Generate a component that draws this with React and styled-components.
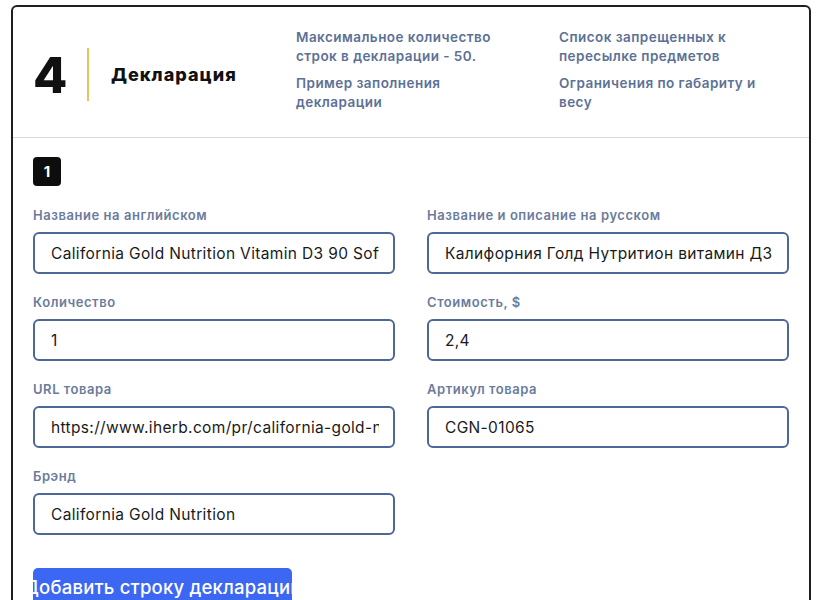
import React from "react";
import styled, { createGlobalStyle } from "styled-components";

const Global = createGlobalStyle`
  html, body { margin: 0; padding: 0; background: #fff; }
  body { font-family: Inter, "Noto Sans", sans-serif; color: #111; }
  * { box-sizing: border-box; }
`;

const Page = styled.div`
  padding: 5px 10px 0 11px;
`;

const Card = styled.div`
  border: 2px solid #1f1f1f;
  border-radius: 6px;
  background: #fff;
  overflow: hidden;
`;

const Header = styled.div`
  display: flex;
  align-items: flex-start;
  height: 131px;
  border-bottom: 1px solid #d9d9d9;
  padding: 0 20px;
`;

const Brand = styled.div`
  display: flex;
  align-items: center;
  width: 263px;
  height: 100%;
  padding-top: 5px;
`;

const StepNum = styled.div`
  font-size: 50px;
  font-weight: 800;
  line-height: 1;
  width: 33px;
  letter-spacing: -1px;
`;

const GoldLine = styled.div`
  width: 2px;
  height: 53px;
  background: #e6c35c;
  margin: 0 22px 0 21px;
`;

const Title = styled.div`
  font-size: 18px;
  font-weight: 800;
  letter-spacing: 1px;
`;

const Links = styled.div`
  display: grid;
  grid-template-columns: 212px 212px;
  column-gap: 51px;
  padding-top: 21px;
`;

const LinkCol = styled.div`
  display: flex;
  flex-direction: column;
  gap: 8px;
`;

const Link = styled.a`
  font-size: 13.5px;
  font-weight: 600;
  line-height: 19px;
  letter-spacing: 0.45px;
  color: #5d7196;
  text-decoration: none;
`;

const Body = styled.div`
  padding: 19px 20px 0 20px;
`;

const Badge = styled.div`
  width: 28px;
  height: 29px;
  border-radius: 4px;
  background: #0d0d0d;
  color: #fff;
  font-size: 15px;
  font-weight: 700;
  display: flex;
  align-items: center;
  justify-content: center;
  margin-bottom: 20px;
`;

const Grid = styled.div`
  display: grid;
  grid-template-columns: 362px 362px;
  column-gap: 32px;
  row-gap: 19px;
`;

const Field = styled.div`
  display: flex;
  flex-direction: column;
  gap: 8px;
`;

const Label = styled.label`
  font-size: 13px;
  font-weight: 600;
  line-height: 18px;
  letter-spacing: 0.55px;
  color: #6a7c9c;
`;

const Input = styled.input`
  height: 42px;
  width: 100%;
  border: 2px solid #4d6796;
  border-radius: 6px;
  padding: 0 14px 0 16px;
  font-family: Inter, "Noto Sans", sans-serif;
  font-size: 15.5px;
  font-weight: 400;
  letter-spacing: 0.35px;
  color: #1a1a1a;
  background: #fff;
  outline: none;
`;

const AddButton = styled.button`
  margin-top: 33px;
  width: 259px;
  height: 44px;
  border: none;
  border-radius: 5px;
  background: #3c67f3;
  color: #fff;
  font-family: Inter, "Noto Sans", sans-serif;
  font-size: 18.5px;
  font-weight: 500;
  letter-spacing: 0.2px;
  display: flex;
  justify-content: center;
  align-items: flex-start;
  padding: 8px 0 0;
  white-space: nowrap;
  overflow: visible;
`;

const fields = [
  { label: "Название на английском", value: "California Gold Nutrition Vitamin D3 90 Softgels" },
  { label: "Название и описание на русском", value: "Калифорния Голд Нутритион витамин Д3 90 капсул" },
  { label: "Количество", value: "1" },
  { label: "Стоимость, $", value: "2,4" },
  { label: "URL товара", value: "https://www.iherb.com/pr/california-gold-nutrition-vitamin-d3" },
  { label: "Артикул товара", value: "CGN-01065" },
  { label: "Брэнд", value: "California Gold Nutrition" },
];

export default function App() {
  return (
    <>
      <Global />
      <Page>
        <Card>
          <Header>
            <Brand>
              <StepNum>4</StepNum>
              <GoldLine />
              <Title>Декларация</Title>
            </Brand>
            <Links>
              <LinkCol>
                <Link href="#">Максимальное количество строк в декларации - 50.</Link>
                <Link href="#">Пример заполнения декларации</Link>
              </LinkCol>
              <LinkCol>
                <Link href="#">Список запрещенных к пересылке предметов</Link>
                <Link href="#">Ограничения по габариту и весу</Link>
              </LinkCol>
            </Links>
          </Header>
          <Body>
            <Badge>1</Badge>
            <Grid>
              {fields.map((f) => (
                <Field key={f.label}>
                  <Label>{f.label}</Label>
                  <Input defaultValue={f.value} readOnly />
                </Field>
              ))}
            </Grid>
            <AddButton>
              <span>Добавить строку декларации</span>
            </AddButton>
          </Body>
        </Card>
      </Page>
    </>
  );
}
